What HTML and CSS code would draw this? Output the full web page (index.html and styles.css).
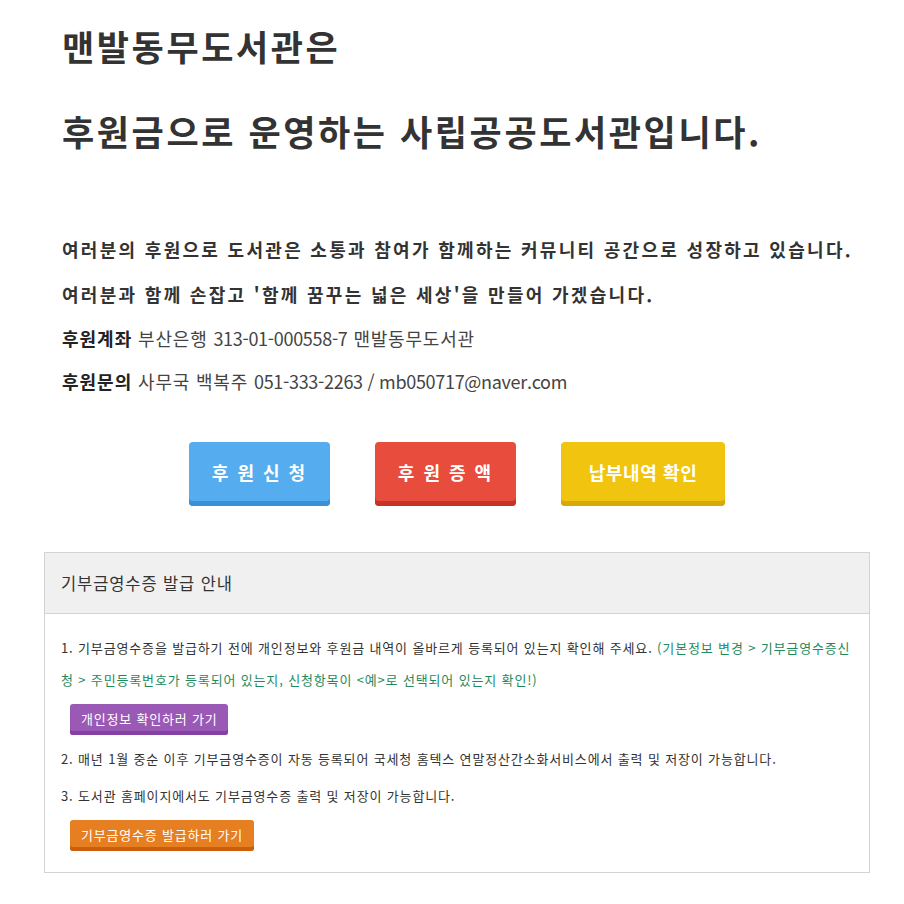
FILE: index.html
```html
<!DOCTYPE html>
<html lang="ko">
<head>
<meta charset="utf-8">
<link rel="stylesheet" href="styles.css">
</head>
<body>
<div class="wrap">
  <div class="intro">
    <h1 class="title">맨발동무도서관은</h1>
    <h1 class="title second">후원금으로 운영하는 사립공공도서관입니다.</h1>
    <p class="lead">여러분의 후원으로 도서관은 소통과 참여가 함께하는 커뮤니티 공간으로 성장하고 있습니다.</p>
    <p class="lead">여러분과 함께 손잡고 '함께 꿈꾸는 넓은 세상'을 만들어 가겠습니다.</p>
    <p class="info"><b>후원계좌</b> 부산은행 <span class="num">313-01-000558-7</span> 맨발동무도서관</p>
    <p class="info"><b>후원문의</b> 사무국 백복주 <span class="num">051-333-2263 / mb050717@naver.com</span></p>
  </div>
  <div class="btns">
    <a class="btn blue spaced">후 원 신 청</a>
    <a class="btn red spaced">후 원 증 액</a>
    <a class="btn yellow">납부내역 확인</a>
  </div>
  <div class="panel">
    <div class="panel-head">기부금영수증 발급 안내</div>
    <div class="panel-body">
      <p class="item">1. 기부금영수증을 발급하기 전에 개인정보와 후원금 내역이 올바르게 등록되어 있는지 확인해 주세요. <span class="green">(기본정보 변경 &gt; 기부금영수증신청 &gt; 주민등록번호가 등록되어 있는지, 신청항목이 &lt;예&gt;로 선택되어 있는지 확인!)</span></p>
      <a class="sbtn purple">개인정보 확인하러 가기</a>
      <p class="item">2. 매년 1월 중순 이후 기부금영수증이 자동 등록되어 국세청 홈텍스 연말정산간소화서비스에서 출력 및 저장이 가능합니다.</p>
      <p class="item">3. 도서관 홈페이지에서도 기부금영수증 출력 및 저장이 가능합니다.</p>
      <a class="sbtn orange">기부금영수증 발급하러 가기</a>
    </div>
  </div>
</div>
</body>
</html>
```
FILE: styles.css
```css
* { box-sizing: border-box; }
html, body { margin: 0; padding: 0; background: #fff; }
body {
  font-family: "Noto Sans CJK KR", "Noto Sans", sans-serif;
  color: #333;
}
.wrap {
  width: 826px;
  margin: 0 0 0 44px;
  padding-top: 20px;
}
.intro { padding: 0 0 0 18px; }
.title {
  margin: 0;
  font-size: 35px;
  font-weight: 700;
  line-height: 52px;
  color: #333;
  letter-spacing: 2.6px;
}
.title.second { margin-top: 33px; }
.lead {
  margin: 0;
  font-size: 18px;
  font-weight: 700;
  line-height: 45px;
  color: #333;
  letter-spacing: 2.3px;
  white-space: nowrap;
}
.title.second + .lead { margin-top: 70px; }
.info {
  margin: 0;
  font-size: 18px;
  line-height: 43px;
  color: #444;
  letter-spacing: 0.8px;
}
.info .num { letter-spacing: -0.3px; }
.info b { color: #222; letter-spacing: 1px; }
.btns {
  display: flex;
  justify-content: center;
  gap: 45px;
  margin-top: 39px;
}
.btn {
  display: flex;
  align-items: center;
  justify-content: center;
  height: 64px;
  border-radius: 4px;
  color: #fff;
  font-size: 18px;
  font-weight: 700;
  padding-bottom: 4px;
}
.btn.spaced { width: 141px; letter-spacing: 2px; }
.btn.yellow { width: 164px; letter-spacing: 0.6px; }
.blue { background: #55acee; box-shadow: inset 0 -5px 0 #3b8fd5; }
.red { background: #e74c3c; box-shadow: inset 0 -5px 0 #c63427; }
.yellow { background: #f1c40f; box-shadow: inset 0 -5px 0 #d8a80a; }
.panel {
  margin-top: 46px;
  border: 1px solid #d3d3d3;
}
.panel-head {
  height: 61px;
  background: #f0f0f0;
  border-bottom: 1px solid #d3d3d3;
  padding: 0 16px;
  display: flex;
  align-items: center;
  font-size: 16.5px;
  font-weight: 400;
  color: #333;
  letter-spacing: 0.9px;
}
.panel-body { padding: 18px 16px 13px; }
.item {
  margin: 0 0 5px;
  font-size: 13px;
  line-height: 32px;
  color: #333;
  letter-spacing: 0.85px;
}
.green { color: #1f8a5c; }
.sbtn {
  display: inline-flex;
  align-items: center;
  height: 31px;
  padding: 0 11px 3px;
  margin: 3px 0 8px 9px;
  border-radius: 3px;
  color: #fff;
  font-size: 13px;
  letter-spacing: 0.8px;
}
.purple { background: #9b59b6; box-shadow: inset 0 -4px 0 #8440a3; }
.orange { background: #e67e22; box-shadow: inset 0 -4px 0 #cc5f0c; }
```
